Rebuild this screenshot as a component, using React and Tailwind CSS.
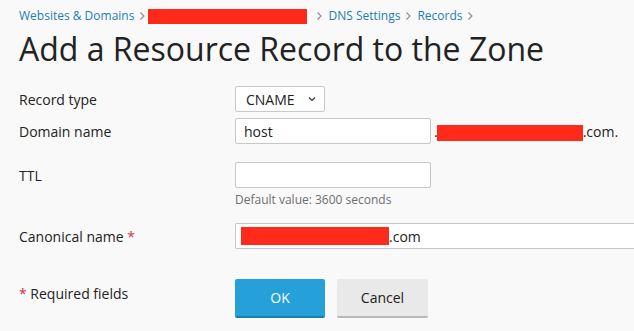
import React from "react";

const Chevron = () => (
  <svg width="7" height="10" viewBox="0 0 7 10" className="mx-[5px] shrink-0">
    <path d="M1.5 1.5 L5 5 L1.5 8.5" fill="none" stroke="#8a8a8a" strokeWidth="1.1" />
  </svg>
);

const Red = ({ className }) => <div className={"bg-[#ff2a1a] " + className} />;

export default function App() {
  return (
    <div
      className="w-[634px] h-[331px] overflow-hidden bg-[#f9f9f9] text-[#222] pl-[19px]"
      style={{ fontFamily: '"Open Sans", sans-serif' }}
    >
      <div className="flex items-center pt-[7px] h-[25px] text-[12px] text-[#1d7db5]">
        <span>Websites &amp; Domains</span>
        <Chevron />
        <Red className="w-[159px] h-[15px] ml-[-3px] mr-[4px]" />
        <Chevron />
        <span>DNS Settings</span>
        <Chevron />
        <span>Records</span>
        <Chevron />
      </div>
      <h1 className="text-[32px] leading-[42px] mt-[3px] font-normal text-[#222]">
        Add a Resource Record to the Zone
      </h1>

      <div className="mt-[16px] text-[14px]">
        <div className="flex items-center h-[26px]">
          <div className="w-[216px]">Record type</div>
          <div className="w-[90px] h-[26px] border border-[#c8c8c8] bg-white rounded-[2px] flex items-center pl-[10px] pr-[8px]">
            <span className="flex-1">CNAME</span>
            <svg width="8" height="6" viewBox="0 0 8 6">
              <path d="M1 1.5 L4 4.5 L7 1.5" fill="none" stroke="#333" strokeWidth="1.2" />
            </svg>
          </div>
        </div>

        <div className="flex items-center h-[26px] mt-[6px]">
          <div className="w-[216px]">Domain name</div>
          <div className="w-[196px] h-[26px] border border-[#c8c8c8] bg-white rounded-[2px] flex items-center pl-[8px]">
            host
          </div>
          <span className="ml-[3px]">.</span>
          <Red className="w-[146px] h-[16px] ml-[-1px] mt-[4px]" />
          <span>.com.</span>
        </div>

        <div className="flex items-center h-[26px] mt-[18px]">
          <div className="w-[216px]">TTL</div>
          <div className="w-[196px] h-[26px] border border-[#c8c8c8] bg-white rounded-[2px]" />
        </div>
        <div className="pl-[216px] text-[12px] text-[#6e6e6e] mt-[4px] leading-[16px]">
          Default value: 3600 seconds
        </div>

        <div className="flex items-center h-[26px] mt-[15px]">
          <div className="w-[216px]">
            Canonical name <span className="text-[#d9303b]">*</span>
          </div>
          <div className="flex-1 h-[26px] border border-[#c8c8c8] border-r-0 bg-white rounded-l-[2px] flex items-center pl-[5px]">
            <Red className="w-[148px] h-[18px]" />
            <span>.com</span>
          </div>
        </div>

        <div className="flex items-center mt-[30px]">
          <div className="w-[216px] pb-[10px]">
            <span className="text-[#d9303b]">*</span> Required fields
          </div>
          <button className="w-[90px] h-[39px] bg-[#26a0d9] text-white text-[14px] rounded-[2px] border-b-2 border-[#1a7fb0]">
            OK
          </button>
          <button className="w-[91px] h-[39px] ml-[12px] bg-[#e9e9e9] text-[#222] text-[14px] rounded-[2px] border-b-2 border-[#b8b8b8]">
            Cancel
          </button>
        </div>
      </div>
    </div>
  );
}
